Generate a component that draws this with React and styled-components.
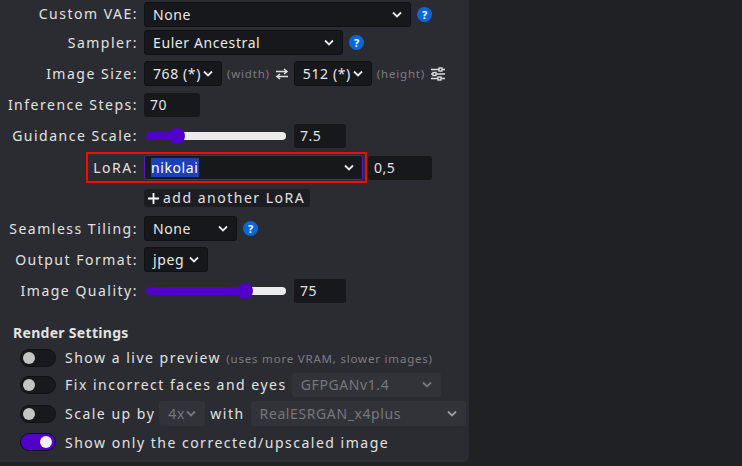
import React from "react";
import styled, { createGlobalStyle } from "styled-components";

const Global = createGlobalStyle`
  body { margin: 0; background: #202124; font-family: "Noto Sans", "Open Sans", sans-serif; font-size: 14px; letter-spacing: 1.5px; color: #e2e2e2; }
`;

const Page = styled.div`
  width: 742px;
  height: 466px;
  overflow: hidden;
`;

const Panel = styled.div`
  width: 469px;
  height: 462px;
  background: #2b2c31;
  border-radius: 0 0 6px 0;
  box-sizing: border-box;
  padding-top: 1px;
`;

const Form = styled.div`
  display: grid;
  grid-template-columns: 138px 1fr;
  column-gap: 6px;
  align-items: center;
`;

const Label = styled.div`
  text-align: right;
  height: ${(p) => p.$h || 31}px;
  line-height: ${(p) => p.$h || 31}px;
  white-space: nowrap;
`;

const Cell = styled.div`
  display: flex;
  align-items: center;
  gap: ${(p) => p.$gap ?? 6}px;
  height: ${(p) => p.$h || 31}px;
  white-space: nowrap;
`;

const Select = styled.div`
  box-sizing: border-box;
  width: ${(p) => p.$w}px;
  height: ${(p) => p.$hh || 25}px;
  flex: none;
  background: #17181b;
  border: 1px solid ${(p) => (p.$focus ? "#5a16c6" : "#101114")};
  border-radius: 3px;
  display: flex;
  align-items: center;
  justify-content: space-between;
  padding: 0 8px 0 ${(p) => p.$pl ?? 8}px;
  letter-spacing: 0.6px;
  color: ${(p) => (p.$dim ? "#76777c" : "#e8e8e8")};
  ${(p) => p.$dim && "background: #323338; border-color: #323338;"}
`;

const Input = styled.div`
  box-sizing: border-box;
  width: ${(p) => p.$w}px;
  height: 24px;
  background: #17181b;
  border-radius: 3px;
  padding: 0 6px;
  line-height: 24px;
  letter-spacing: 0.5px;
`;

const Help = styled.span`
  width: 15px;
  height: 15px;
  border-radius: 50%;
  background: #0b66d8;
  color: #fff;
  font-size: 11px;
  font-weight: 700;
  letter-spacing: 0;
  display: inline-flex;
  align-items: center;
  justify-content: center;
`;

const Hint = styled.span`
  color: #7b7c82;
  font-size: 11.5px;
  letter-spacing: 0.8px;
`;

const Track = styled.div`
  position: relative;
  width: 140px;
  height: 8px;
  margin: 0 2px;
  border-radius: 4px;
  background: linear-gradient(to right, #5200c9 ${(p) => p.$v}%, #ececec ${(p) => p.$v}%);
`;

const Thumb = styled.span`
  position: absolute;
  top: -4px;
  width: 16px;
  height: 16px;
  border-radius: 50%;
  background: #5200c9;
  transform: translateX(-8px);
`;

const RedBox = styled.div`
  grid-column: 1 / span 2;
  display: flex;
  align-items: center;
  height: 31px;
`;

const LoraFrame = styled.div`
  display: flex;
  align-items: center;
  gap: 6px;
  margin-left: 86px;
  height: 31px;
  width: 281px;
  box-sizing: border-box;
  border: 2px solid #f20b0b;
  padding: 0 2px 0 0;
  justify-content: flex-end;
`;

const Selected = styled.span`
  background: #1e3fb8;
  color: #fff;
`;

const AddBtn = styled.div`
  background: #1c1d21;
  border-radius: 3px;
  padding: 0 5px 0 4px;
  height: 18px;
  line-height: 18px;
  display: flex;
  align-items: center;
  gap: 4px;
`;

const Heading = styled.div`
  font-weight: 700;
  margin: 17px 0 2px 13px;
  letter-spacing: 0.3px;
`;

const ToggleRow = styled.div`
  display: flex;
  align-items: center;
  gap: 9px;
  padding-left: 20px;
  height: ${(p) => p.$h || 27}px;
  white-space: nowrap;
`;

const Switch = styled.span`
  position: relative;
  width: 34px;
  height: 16px;
  border-radius: 9px;
  background: ${(p) => (p.$on ? "#5200c9" : "#18191c")};
  border: 1px solid #101114;
  flex: none;
  &::after {
    content: "";
    position: absolute;
    top: 2px;
    left: ${(p) => (p.$on ? "19px" : "2px")};
    width: 12px;
    height: 12px;
    border-radius: 50%;
    background: ${(p) => (p.$on ? "#f1f1f1" : "#c4c4c4")};
  }
`;

const Chevron = ({ c = "#e8e8e8" }) => (
  <svg width="10" height="7" viewBox="0 0 10 7">
    <path d="M1 1.5l4 4 4-4" stroke={c} strokeWidth="1.8" fill="none" />
  </svg>
);

const Swap = () => (
  <svg width="14" height="12" viewBox="0 0 14 12">
    <path d="M1 3.5h11M9 1l3 2.5-3 2.5M13 8.5H2M5 6l-3 2.5 3 2.5" stroke="#ddd" strokeWidth="1.6" fill="none" />
  </svg>
);

const Sliders = () => (
  <svg width="16" height="14" viewBox="0 0 16 14">
    <g stroke="#ddd" strokeWidth="1.6">
      <path d="M1 2.5h14M1 7h14M1 11.5h14" />
    </g>
    <g fill="#2b2c31" stroke="#ddd" strokeWidth="1.4">
      <rect x="9" y="1" width="3" height="3" />
      <rect x="3" y="5.5" width="3" height="3" />
      <rect x="8" y="10" width="3" height="3" />
    </g>
  </svg>
);

export default function App() {
  return (
    <Page>
      <Global />
      <Panel>
        <Form>
          <Label $h={26}>Custom VAE:</Label>
          <Cell $h={26}>
            <Select $w={267}>None<Chevron /></Select>
            <Help>?</Help>
          </Cell>

          <Label>Sampler:</Label>
          <Cell>
            <Select $w={199}>Euler Ancestral<Chevron /></Select>
            <Help>?</Help>
          </Cell>

          <Label>Image Size:</Label>
          <Cell $gap={5}>
            <Select $w={78}>768 (*)<Chevron /></Select>
            <Hint>(width)</Hint>
            <Swap />
            <Select $w={78}>512 (*)<Chevron /></Select>
            <Hint>(height)</Hint>
            <Sliders />
          </Cell>

          <Label>Inference Steps:</Label>
          <Cell><Input $w={56}>70</Input></Cell>

          <Label $h={32}>Guidance Scale:</Label>
          <Cell $h={32}>
            <Track $v={22}><Thumb style={{ left: "22%" }} /></Track>
            <Input $w={52}>7.5</Input>
          </Cell>

          <RedBox>
            <LoraFrame>
              <span>LoRA:</span>
              <Select $w={219} $focus $pl={6}><Selected>nikolai</Selected><Chevron /></Select>
            </LoraFrame>
            <Input $w={64} style={{ marginLeft: 1 }}>0,5</Input>
          </RedBox>

          <Label $h={30} />
          <Cell $h={30}>
            <AddBtn>
              <svg width="11" height="11" viewBox="0 0 11 11"><path d="M5.5 0v11M0 5.5h11" stroke="#fff" strokeWidth="1.8" /></svg>
              add another LoRA
            </AddBtn>
          </Cell>

          <Label>Seamless Tiling:</Label>
          <Cell>
            <Select $w={93}>None<Chevron /></Select>
            <Help>?</Help>
          </Cell>

          <Label>Output Format:</Label>
          <Cell><Select $w={64}>jpeg<Chevron /></Select></Cell>

          <Label $h={31}>Image Quality:</Label>
          <Cell $h={31}>
            <Track $v={71}><Thumb style={{ left: "71%" }} /></Track>
            <Input $w={52}>75</Input>
          </Cell>
        </Form>

        <Heading>Render Settings</Heading>
        <ToggleRow>
          <Switch />
          <span>Show a live preview <Hint>(uses more VRAM, slower images)</Hint></span>
        </ToggleRow>
        <ToggleRow>
          <Switch />
          <span>Fix incorrect faces and eyes</span>
          <Select $w={149} $hh={24} $dim style={{ marginLeft: -4 }}>GFPGANv1.4<Chevron c="#76777c" /></Select>
        </ToggleRow>
        <ToggleRow $h={31}>
          <Switch />
          <span>Scale up by</span>
          <Select $w={46} $hh={25} $dim style={{ marginLeft: -5 }}>4x<Chevron c="#76777c" /></Select>
          <span style={{ marginLeft: -4 }}>with</span>
          <Select $w={215} $hh={25} $dim style={{ marginLeft: -3 }}>RealESRGAN_x4plus<Chevron c="#9a9ba0" /></Select>
        </ToggleRow>
        <ToggleRow $h={26}>
          <Switch $on />
          <span>Show only the corrected/upscaled image</span>
        </ToggleRow>
      </Panel>
    </Page>
  );
}
